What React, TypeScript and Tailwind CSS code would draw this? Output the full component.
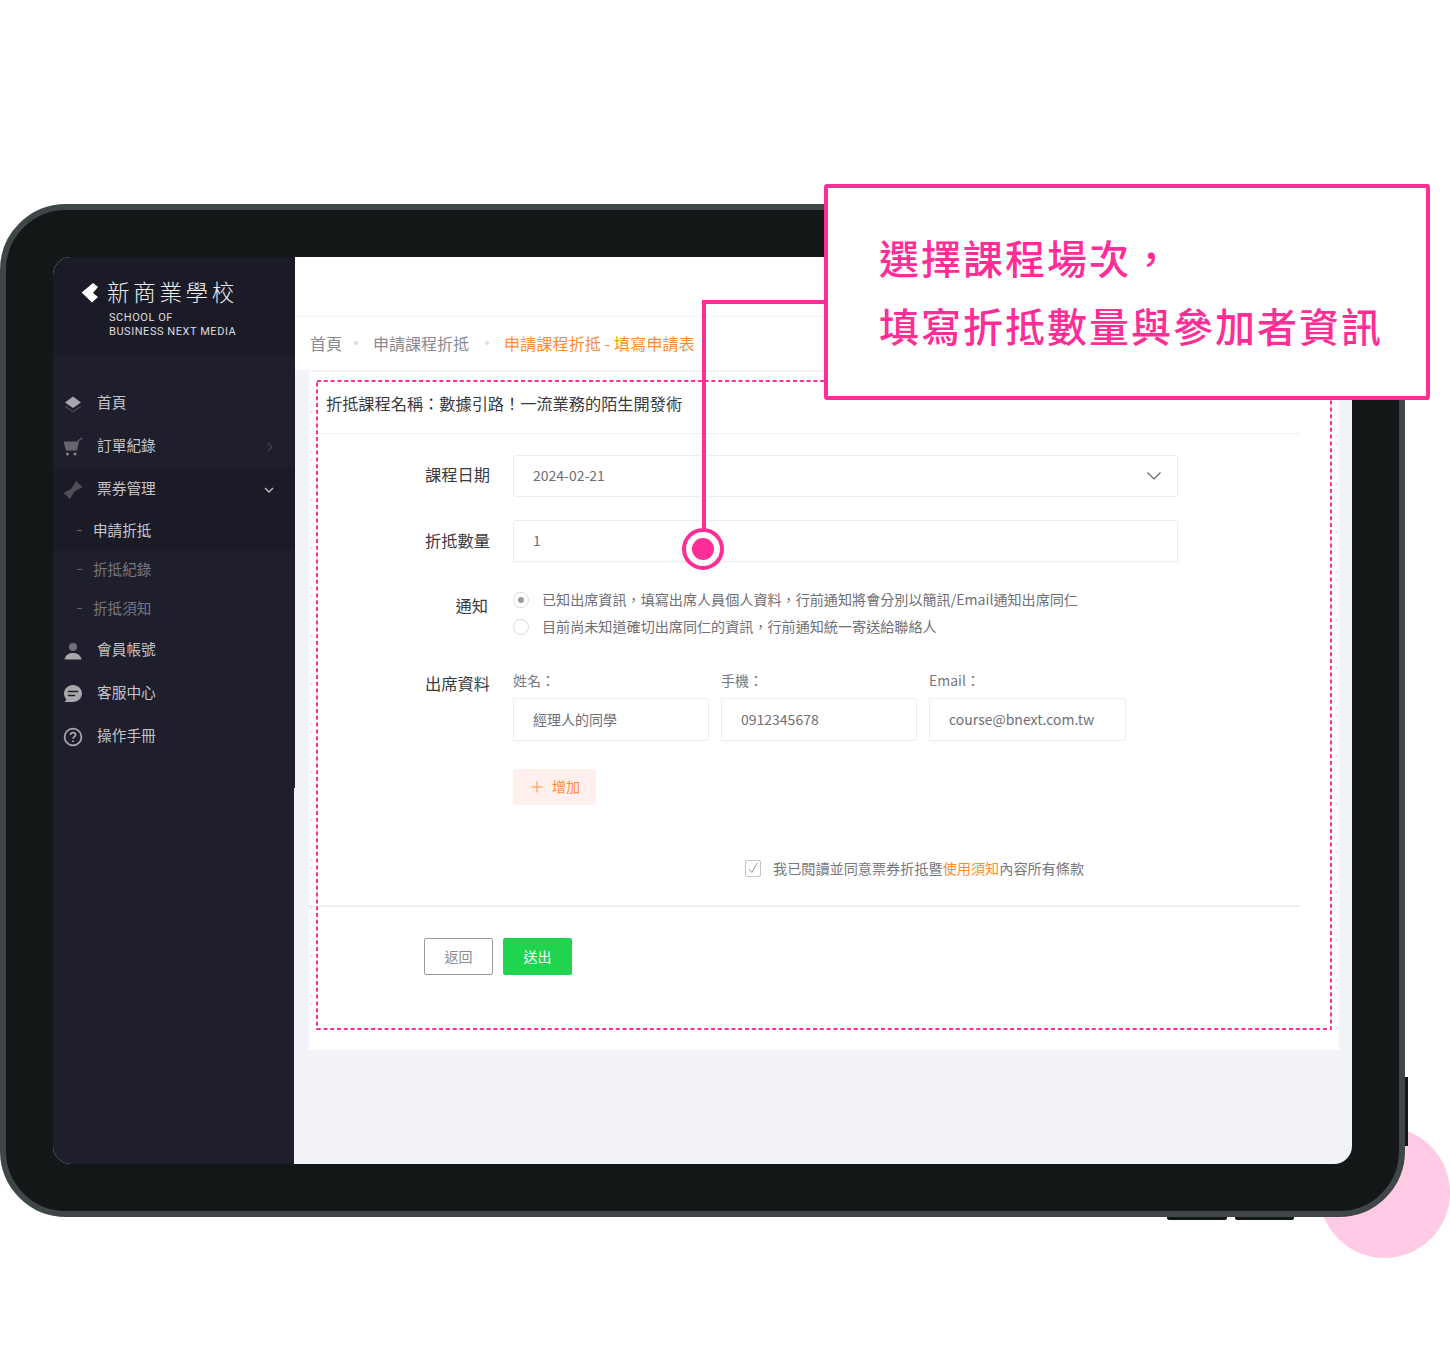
import React from 'react';

const cjk = 'font-["Noto_Sans_CJK_TC","Noto_Sans",sans-serif]';

const MenuItem: React.FC<{ icon: React.ReactNode; label: string; trailing?: React.ReactNode; dark?: boolean }> = ({ icon, label, trailing, dark }) => (
  <div className={`h-[43px] flex items-center pl-[10px] pr-[21px] ${dark ? 'bg-[#1b1b28]' : ''}`}>
    <span className="w-[20px] h-[20px] flex items-center justify-center">{icon}</span>
    <span className="ml-[14px] pb-[2px] text-[14.7px] text-[#c4c4c8] flex-1">{label}</span>
    {trailing}
  </div>
);

const SubItem: React.FC<{ label: string; active?: boolean }> = ({ label, active }) => (
  <div className={`h-[39px] flex items-center pl-[24px] text-[14.6px] ${active ? 'bg-[#1b1b28] text-[#c9c9cd]' : 'text-[#77777f]'}`}>
    <span className="w-[5px] h-px bg-[#66666e]" />
    <span className="ml-[11px] pb-[2px]">{label}</span>
  </div>
);

const Input: React.FC<{ value: string; className: string; children?: React.ReactNode }> = ({ value, className, children }) => (
  <div className={`border border-[#ebedf2] rounded-[2px] flex items-center pl-[19px] pr-[15px] text-[14px] text-[#6f6f76] ${className}`}>
    <span className="flex-1 pb-px">{value}</span>
    {children}
  </div>
);

const Sidebar: React.FC = () => (
  <aside className="w-[242px] flex flex-col shrink-0">
    <div className="h-[98px] bg-[#1b1b28] pl-[28px] pt-[19px] text-white">
      <div className="flex items-center">
        <svg className="mt-[4px]" width="17" height="20" viewBox="0 0 17 20">
          <path d="M0.7 9.5 12 0 17 4 12 10 17 14 11 19.5Z" fill="#fff" />
        </svg>
        <span className="ml-[9px] text-[22.5px] leading-[30px] tracking-[3.7px] font-light text-[#eeeeee]">新商業學校</span>
      </div>
      <div className="ml-[28px] mt-[5px] font-['Roboto',sans-serif] text-[11px] leading-[14px] tracking-[0.55px] text-[#dddddd]">
        SCHOOL OF<br />BUSINESS NEXT MEDIA
      </div>
    </div>
    <nav className="h-[433px] bg-[#1e1e2d] pt-[27px]">
      <MenuItem
        label="首頁"
        icon={
          <svg width="18" height="18" viewBox="0 0 18 18">
            <path d="M9 1.5 17 7.5 9 13 1 7.5Z" fill="#a8a8ac" />
            <path d="M2 11 9 16 16 11 17 12 9 17.5 1 12Z" fill="#4a4a55" />
          </svg>
        }
      />
      <MenuItem
        label="訂單紀錄"
        trailing={
          <svg width="8" height="10" viewBox="0 0 8 10" fill="none" stroke="#44444f" strokeWidth="1.2"><path d="M2 1 6 5 2 9" /></svg>
        }
        icon={
          <svg width="20" height="20" viewBox="0 0 20 20">
            <path d="M0.5 4.5H15.5L13.5 13.5H3Z" fill="#66666c" />
            <path d="M13.5 13.5 15.5 3.5 19.5 1" fill="none" stroke="#5c5c63" strokeWidth="1.4" />
            <circle cx="4.5" cy="17" r="1.5" fill="#85858a" />
            <circle cx="12" cy="17" r="1.5" fill="#85858a" />
          </svg>
        }
      />
      <MenuItem
        dark
        label="票券管理"
        trailing={
          <svg width="10" height="8" viewBox="0 0 10 8" fill="none" stroke="#bcbcc0" strokeWidth="1.4"><path d="M1 2 5 6 9 2" /></svg>
        }
        icon={
          <svg width="20" height="20" viewBox="0 0 20 20">
            <path d="M13 1 19.5 7 11.5 11.5 7 19 0.5 13 8.5 8.5Z" fill="#4f4f57" />
          </svg>
        }
      />
      <SubItem label="申請折抵" active />
      <SubItem label="折抵紀錄" />
      <SubItem label="折抵須知" />
      <div className="mt-px">
        <MenuItem
          label="會員帳號"
          icon={
            <svg width="18" height="18" viewBox="0 0 18 18">
              <circle cx="9" cy="5" r="4" fill="#70707a" />
              <path d="M0.5 17.5C1.5 12.5 5 11 9 11S16.5 12.5 17.5 17.5Z" fill="#a8a8ac" />
            </svg>
          }
        />
        <MenuItem
          label="客服中心"
          icon={
            <svg width="20" height="20" viewBox="0 0 20 20">
              <path d="M10 1C15 1 19 4.8 19 9.5S15 18 10 18H1.5L3.5 15.5C2 14 1 11.8 1 9.5 1 4.8 5 1 10 1Z" fill="#a8a8ac" />
              <path d="M5.5 7.5H14.5M5.5 11.5H11.5" stroke="#1e1e2d" strokeWidth="1.6" strokeLinecap="round" />
            </svg>
          }
        />
        <MenuItem
          label="操作手冊"
          icon={
            <svg width="20" height="20" viewBox="0 0 20 20" fill="none" stroke="#a8a8ac" strokeWidth="1.7">
              <circle cx="10" cy="10" r="8.4" />
              <path d="M7.4 7.8C7.6 6.3 8.7 5.6 10 5.6 11.5 5.6 12.6 6.5 12.6 7.8 12.6 9.6 10 9.6 10 11.8" />
              <path d="M10 13.4V15" />
            </svg>
          }
        />
      </div>
    </nav>
    <div className="flex-1 bg-[#1e1e2d] mr-[1px]" />
  </aside>
);

const Form: React.FC = () => (
  <div className="mx-[14px] w-[1030px] h-[678px] bg-white">
    <div className="w-[991px] h-[62px] border-b border-[#f0f1f5] pl-[17px] pt-[18px] text-[16.2px] leading-[26px] text-[#3a3a40]">
      折抵課程名稱：數據引路！一流業務的陌生開發術
    </div>

    <div className="flex mt-[21px] items-center">
      <label className="w-[181px] pb-[3px] text-right text-[16.25px] text-[#3a3a40]">課程日期</label>
      <Input value="2024-02-21" className="ml-[23px] w-[665px] h-[42px]">
        <svg width="16" height="10" viewBox="0 0 16 10" fill="none" stroke="#5f6068" strokeWidth="1.2"><path d="M1.5 1.5 8 8 14.5 1.5" /></svg>
      </Input>
    </div>

    <div className="flex mt-[23px] items-center">
      <label className="w-[181px] pb-[2px] text-right text-[16.25px] text-[#3a3a40]">折抵數量</label>
      <Input value="1" className="ml-[23px] w-[665px] h-[42px]" />
    </div>

    <div className="flex mt-[24px]">
      <label className="w-[179px] text-right text-[16.25px] leading-[24px] mt-[7px] text-[#3a3a40]">通知</label>
      <div className="ml-[24px] text-[14.1px] text-[#6f6f76]">
        <div className="flex items-center h-[27px]">
          <span className="ml-px w-[16px] h-[16px] rounded-full border border-[#d8dae0] flex items-center justify-center">
            <span className="w-[6px] h-[6px] rounded-full bg-[#9a9aa0]" />
          </span>
          <span className="ml-[13px]">已知出席資訊，填寫出席人員個人資料，行前通知將會分別以簡訊/Email通知出席同仁</span>
        </div>
        <div className="flex items-center h-[27px]">
          <span className="ml-px w-[16px] h-[16px] rounded-full border border-[#d8dae0]" />
          <span className="ml-[13px]">目前尚未知道確切出席同仁的資訊，行前通知統一寄送給聯絡人</span>
        </div>
      </div>
    </div>

    <div className="flex mt-[30px]">
      <label className="w-[181px] text-right text-[16.25px] leading-[24px] mt-[1px] text-[#3a3a40]">出席資料</label>
      <div className="ml-[23px]">
        <div className="flex gap-[12px] text-[14px] leading-[20px] text-[#77777e]">
          <div className="w-[196px]">
            <div>姓名：</div>
            <Input value="經理人的同學" className="mt-[8px] h-[43px]" />
          </div>
          <div className="w-[196px]">
            <div>手機：</div>
            <Input value="0912345678" className="mt-[8px] h-[43px]" />
          </div>
          <div className="w-[197px]">
            <div>Email：</div>
            <Input value="course@bnext.com.tw" className="mt-[8px] h-[43px]" />
          </div>
        </div>
        <div className="mt-[28px] w-[83px] h-[36px] bg-[#fff0ee] rounded-[2px] flex items-center pl-[18px] text-[14px] text-[#ff8d30]">
          <svg width="12" height="12" viewBox="0 0 12 12" stroke="#ff8d30" strokeWidth="1"><path d="M6 0.5V11.5M0.5 6H11.5" /></svg>
          <span className="ml-[9px] pb-px">增加</span>
        </div>
      </div>
    </div>

    <div className="flex items-center mt-[54px] ml-[436px] text-[14.15px] leading-[18px] text-[#77777e]">
      <span className="w-[16px] h-[17px] border border-[#c4c5c9] rounded-[2px] flex items-center justify-center">
        <svg width="10" height="12" viewBox="0 0 10 12" fill="none" stroke="#9a9a9f" strokeWidth="1"><path d="M1 7 4 10.5 9 1" /></svg>
      </span>
      <span className="ml-[12px]">我已閱讀並同意票券折抵暨<span className="text-[#ff8d30]">使用須知</span>內容所有條款</span>
    </div>

    <div className="w-[991px] h-[2px] bg-[#f0f1f5] mt-[28px]" />

    <div className="flex gap-[10px] ml-[115px] mt-[31px] text-[14px]">
      <button className="w-[69px] h-[37px] border-[1.5px] border-[#9a9a9f] rounded-[2px] bg-white text-[#8a8a90]">返回</button>
      <button className="w-[69px] h-[37px] rounded-[2px] bg-[#21d44f] text-white">送出</button>
    </div>
  </div>
);

const App: React.FC = () => {
  return (
    <div className={`relative w-[1450px] h-[1346px] bg-white overflow-hidden pt-[204px] ${cjk}`}>
      {/* pink circle behind the tablet */}
      <div className="absolute left-[1319px] top-[1127px] w-[131px] h-[131px] rounded-full bg-[#ffcbe4]" />

      {/* side + bottom buttons */}
      <div className="absolute left-[1403px] top-[1077px] w-[5px] h-[69px] bg-[#131718]" />
      <div className="absolute left-[1167px] top-[1214px] w-[60px] h-[6px] rounded-b-[2px] bg-[#131718]" />
      <div className="absolute left-[1235px] top-[1214px] w-[59px] h-[6px] rounded-b-[2px] bg-[#131718]" />

      {/* tablet */}
      <div className="relative w-[1405px] h-[1013px] rounded-[66px] bg-[#131718] border-[6px] border-[#3f4648] pl-[47px] pt-[47px]">
        <div className="w-[1299px] h-[907px] rounded-[18px] overflow-hidden flex bg-[#f2f3f8]">
          <Sidebar />
          <main className="flex-1 min-w-0">
            <div className="h-[60px] bg-white border-b border-[#f4f5f8]" />
            <div className="h-[53px] pb-px bg-white flex items-center pl-[15px] text-[16px] text-[#8a8a90]">
              <span>首頁</span>
              <span className="ml-[12px] mr-[15px] w-[4px] h-[4px] rounded-full bg-[#dddde2]" />
              <span>申請課程折抵</span>
              <span className="ml-[16px] mr-[15px] w-[4px] h-[4px] rounded-full bg-[#dddde2]" />
              <span className="text-[16px] tracking-[0.15px] text-[#ff8d30]">申請課程折抵 - 填寫申請表</span>
            </div>
            <div className="pt-[2px]">
              <Form />
            </div>
          </main>
        </div>
      </div>

      {/* dashed highlight round the form */}
      <svg className="absolute left-[316px] top-[380px]" width="1016" height="650" fill="none">
        <rect x="1" y="1" width="1014" height="648" stroke="#ff2d96" strokeWidth="2" strokeDasharray="4 2.8" />
      </svg>

      {/* callout line and marker */}
      <div className="absolute left-[702px] top-[300px] w-[124px] h-[4px] bg-[#ff2d96]" />
      <div className="absolute left-[702px] top-[300px] w-[4px] h-[230px] bg-[#ff2d96]" />
      <div className="absolute left-[682px] top-[528px] w-[42px] h-[42px] rounded-full border-4 border-[#ff2d96] bg-white flex items-center justify-center">
        <span className="w-[22px] h-[22px] rounded-full bg-[#ff2d96]" />
      </div>

      {/* callout */}
      <div className="absolute left-[824px] top-[184px] w-[606px] h-[216px] border-4 border-[#ff2d96] rounded-[3px] bg-white pl-[51px] pt-[35px] text-[40px] leading-[68px] tracking-[2px] font-medium text-[#ff2d96]">
        <div>選擇課程場次，</div>
        <div>填寫折抵數量與參加者資訊</div>
      </div>
    </div>
  );
};

export default App;
